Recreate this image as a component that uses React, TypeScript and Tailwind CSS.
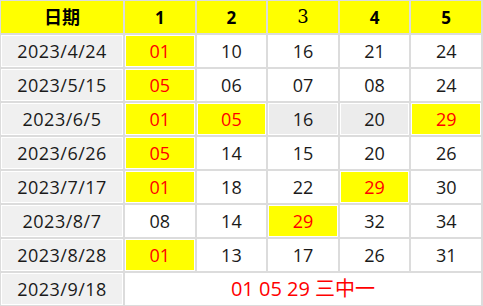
const rows: { date: string; nums: string[]; hit: boolean[]; gray?: boolean[] }[] = [
  { date: "2023/4/24", nums: ["01", "10", "16", "21", "24"], hit: [true, false, false, false, false] },
  { date: "2023/5/15", nums: ["05", "06", "07", "08", "24"], hit: [true, false, false, false, false] },
  {
    date: "2023/6/5",
    nums: ["01", "05", "16", "20", "29"],
    hit: [true, true, false, false, true],
    gray: [false, false, true, true, false],
  },
  { date: "2023/6/26", nums: ["05", "14", "15", "20", "26"], hit: [true, false, false, false, false] },
  { date: "2023/7/17", nums: ["01", "18", "22", "29", "30"], hit: [true, false, false, true, false] },
  { date: "2023/8/7", nums: ["08", "14", "29", "32", "34"], hit: [false, false, true, false, false] },
  { date: "2023/8/28", nums: ["01", "13", "17", "26", "31"], hit: [true, false, false, false, false] },
];

const font = { fontFamily: '"Open Sans", "Noto Sans CJK TC", sans-serif' };

export default function App() {
  return (
    <div className="w-[483px] h-[306px] bg-white overflow-hidden" style={font}>
      <table className="w-[484px] table-fixed border-separate border-spacing-[2px] bg-[#dcdcdc] -mt-px -ml-px text-[18px] leading-none">
        <colgroup>
          <col className="w-[122px]" />
          <col />
          <col />
          <col />
          <col />
          <col />
        </colgroup>
        <thead>
          <tr className="h-[32px]">
            <th className="bg-[#ffff00] font-bold text-black text-[18px]">日期</th>
            <th className="bg-[#ffff00] font-bold text-black text-[17px]">1</th>
            <th className="bg-[#ffff00] font-bold text-black text-[17px]">2</th>
            <th className="bg-[#ffff00] font-normal text-black text-[18px] [font-family:'DejaVu_Serif',serif]">3</th>
            <th className="bg-[#ffff00] font-bold text-black text-[17px]">4</th>
            <th className="bg-[#ffff00] font-bold text-black text-[17px]">5</th>
          </tr>
        </thead>
        <tbody>
          {rows.map((r) => (
            <tr key={r.date} className="h-[32px]">
              <td className="bg-[#f0f0f0] text-center text-[#1a1a1a] border border-white tracking-[0.5px]">{r.date}</td>
              {r.nums.map((n, i) => (
                <td
                  key={i}
                  className={
                    r.hit[i]
                      ? "bg-[#ffff00] text-center text-[#ff0000] border border-white"
                      : r.gray?.[i]
                        ? "bg-[#ececec] text-center text-[#1a1a1a] border border-white"
                        : "bg-white text-center text-[#1a1a1a] border border-white"
                  }
                >
                  {n}
                </td>
              ))}
            </tr>
          ))}
          <tr className="h-[32px]">
            <td className="bg-[#f0f0f0] text-center text-[#1a1a1a] border border-white tracking-[0.5px]">2023/9/18</td>
            <td colSpan={5} className="bg-white text-center text-[20px] text-[#ff0000] border border-white">
              01 05 29 三中一
            </td>
          </tr>
        </tbody>
      </table>
    </div>
  );
}
